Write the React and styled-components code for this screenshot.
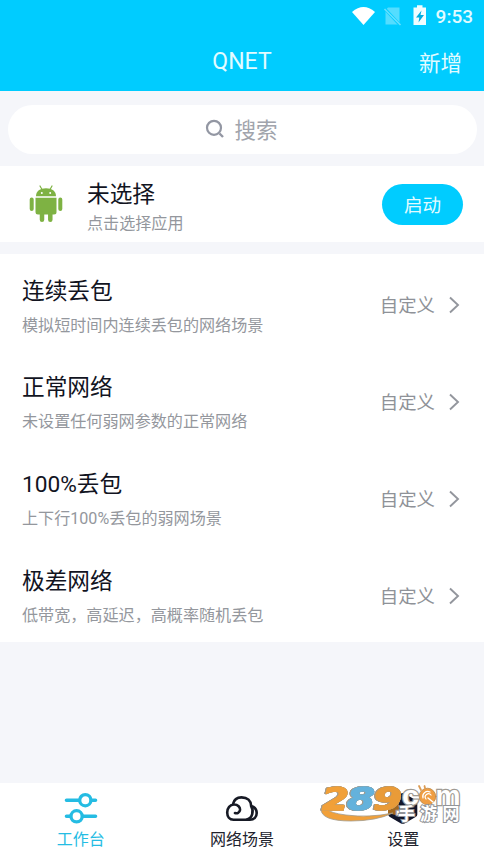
import React from "react";
import styled, { createGlobalStyle } from "styled-components";

const GlobalStyle = createGlobalStyle`
  * {
    box-sizing: border-box;
  }
  body {
    margin: 0;
    background: #f5f6fa;
    font-family: Roboto, "Noto Sans CJK SC", sans-serif;
  }
`;

const Screen = styled.div`
  display: flex;
  flex-direction: column;
  width: 484px;
  height: 860px;
  overflow: hidden;
  background: #f5f6fa;
`;

const Header = styled.header`
  height: 91px;
  background: #00ccff;
  color: #e2fbff;
`;
const StatusBar = styled.div`
  display: flex;
  align-items: center;
  justify-content: flex-end;
  height: 32px;
  padding-right: 11px;
`;
const StatusIcons = styled.svg`
  display: block;
  margin-right: 9px;
`;
const Clock = styled.div`
  padding-top: 1px;
  font-size: 19px;
  font-weight: 500;
  line-height: 32px;
`;
const TitleBar = styled.div`
  display: grid;
  grid-template-columns: 1fr auto 1fr;
  align-items: center;
  height: 59px;
  padding: 0 22px;
`;
const PageTitle = styled.div`
  grid-column: 2;
  font-size: 23px;
  line-height: 28px;
  padding-top: 1px;
`;
const AddButton = styled.div`
  justify-self: end;
  padding-top: 4px;
  font-size: 21.5px;
  line-height: 28px;
`;

const Search = styled.div`
  display: flex;
  align-items: center;
  justify-content: center;
  gap: 9px;
  height: 49px;
  margin: 14px 7px 12px 8px;
  padding-right: 2px;
  border-radius: 25px;
  background: #ffffff;
  font-size: 21.5px;
  line-height: 30px;
  color: #a1a4ac;
`;
const SearchIcon = styled.svg`
  display: block;
  margin-bottom: 2px;
`;
const SearchText = styled.div`
  padding-top: 2px;
`;

const AppCard = styled.div`
  display: flex;
  align-items: center;
  height: 76px;
  margin-bottom: 12px;
  padding: 0 21px 0 29px;
  background: #ffffff;
`;
const Body = styled.div`
  flex: 1;
`;
const AppBody = styled(Body)`
  margin-left: 24px;
  padding-top: 7px;
`;
const Title = styled.div`
  font-size: 22.7px;
  line-height: 32px;
  color: #12141f;
`;
const Hint = styled.div`
  margin-top: ${props => props.$gap || 0}px;
  font-size: 16.1px;
  line-height: 26px;
  color: #94979d;
`;
const StartButton = styled.div`
  width: 81px;
  height: 41px;
  padding-top: 2px;
  border-radius: 21px;
  background: #00ccff;
  font-size: 18.6px;
  line-height: 41px;
  text-align: center;
  color: #e2fbff;
`;

const SceneList = styled.div`
  height: 388px;
  background: #ffffff;
`;
const SceneRow = styled.div`
  display: flex;
  align-items: center;
  height: 96.8px;
  padding: 5.5px 24px 0 22px;
`;
const SceneBody = styled(Body)`
  padding-top: 4px;
`;
const Custom = styled.div`
  display: flex;
  align-items: center;
  gap: 13px;
  font-size: 18.4px;
  line-height: 28px;
  color: #8f9298;
`;
const CustomText = styled.div`
  padding-top: 2px;
`;

const TabBar = styled.nav`
  display: grid;
  grid-template-columns: repeat(3, 1fr);
  position: relative;
  height: 77px;
  margin-top: auto;
  background: #ffffff;
`;
const Tab = styled.div`
  display: flex;
  flex-direction: column;
  align-items: center;
  padding-top: 7px;
  font-size: 16px;
  line-height: 24px;
  color: ${props => (props.$active ? "#25bce3" : "#20222c")};
`;
const TabIcon = styled.svg`
  display: block;
  margin-bottom: 2px;
`;
// the site mark floats over the last tab
const SiteMark = styled.svg`
  position: absolute;
  left: 318px;
  top: 0;
  overflow: visible;
`;
const MarkDigits = styled.g`
  font-family: "DejaVu Sans", sans-serif;
  font-size: 32px;
  font-weight: 700;
  font-style: italic;
  stroke-width: 1.4;
  stroke-linejoin: round;
  filter: drop-shadow(0.7px 0 0 #a29a8c) drop-shadow(-0.7px 0 0 #a29a8c)
    drop-shadow(0 0.6px 0 #a29a8c);
`;
const MarkDomain = styled.g`
  font-family: "Liberation Sans", sans-serif;
  font-size: 27px;
  font-weight: 700;
  fill: #ffffff;
  stroke: #a09b94;
  stroke-width: 2.4;
  paint-order: stroke;
`;
const MarkName = styled.g`
  font-family: "Noto Sans CJK SC", sans-serif;
  font-size: 17px;
  font-weight: 700;
  fill: #ffffff;
  stroke: #92959a;
  stroke-width: 2;
  paint-order: stroke;
`;

const scenes = [
  { name: "连续丢包", hint: "模拟短时间内连续丢包的网络场景" },
  { name: "正常网络", hint: "未设置任何弱网参数的正常网络" },
  { name: "100%丢包", hint: "上下行100%丢包的弱网场景" },
  { name: "极差网络", hint: "低带宽，高延迟，高概率随机丢包" }
];

function StatusGlyphs() {
  return (
    <StatusIcons width="76" height="24" viewBox="0 0 76 24">
      <path d="M1 8Q12.500 -2 24 8L12.500 21Z" fill="#fff" />
      <path
        d="M37 3.500H48.500V20.500H34.500V6Z"
        fill="#fff"
        opacity="0.33"
      />
      <path d="M33.500 4.500L49 21" stroke="#00ccff" strokeWidth="3" />
      <path
        d="M33.500 5L49.500 21"
        stroke="#fff"
        strokeWidth="1.600"
        opacity="0.4"
      />
      <path d="M66 1.200H71.500V3.500H75V21H62.500V3.500H66Z" fill="#f0fdff" />
      <path
        d="M70.500 6.500L65 13.500H68.300L67.500 18.500L73 11H69.500Z"
        fill="#00aee0"
      />
    </StatusIcons>
  );
}

function Android() {
  return (
    <svg width="34" height="38" viewBox="0 0 34 38">
      <g fill="#7eb243" stroke="#7eb243" strokeLinecap="round">
        <path
          d="M7 11.200C7 6 11 3.200 17 3.200S27 6 27 11.200Z"
          stroke="none"
        />
        <path d="M11 1L13 4.500M23 1L21 4.500" strokeWidth="1.200" />
        <path
          d="M6.500 12.700H27.500V27Q27.500 29.500 25 29.500H9Q6.500 29.500 6.500 27Z"
          stroke="none"
        />
        <path d="M2.700 14.500V24M31.300 14.500V24" strokeWidth="4" />
        <path d="M13 29V34.700M21.300 29V34.700" strokeWidth="4.500" />
      </g>
      <circle cx="12.800" cy="7.900" r="1" fill="#fff" />
      <circle cx="21.200" cy="7.900" r="1" fill="#fff" />
    </svg>
  );
}

function Chevron() {
  return (
    <svg width="12" height="18" viewBox="0 0 12 18" fill="none">
      <path d="M2 1.500L10 9L2 16.500" stroke="#93969d" strokeWidth="1.900" />
    </svg>
  );
}

function SlidersIcon() {
  return (
    <TabIcon width="36" height="36" viewBox="0 0 36 36" fill="none">
      <g stroke="#25bce3" strokeWidth="3.600">
        <path
          d="M3.500 10.200H16M28.500 10.200H32.500M3.500 26.300H7M20 26.300H32.500"
          strokeLinecap="round"
        />
        <circle cx="22.300" cy="10.200" r="5.600" strokeWidth="3.300" />
        <circle cx="13.600" cy="26.300" r="5.600" strokeWidth="3.300" />
      </g>
    </TabIcon>
  );
}

function CloudIcon() {
  return (
    <TabIcon width="36" height="36" viewBox="0 0 36 36" fill="none">
      <g stroke="#171a25" strokeWidth="2.600" strokeLinecap="round">
        <path d="M9 14C10 9.500 13 7.400 17.500 7.400C23.500 7.400 27 11 27.200 16C30.500 17 32.700 19.500 32.700 23C32.700 27 30 29.700 26 29.700H9.500C5.500 29.700 3.200 26.500 3.200 22.500C3.200 18 6 14.500 10 14.500C14 14.500 16.300 17.300 16 20C15.600 22.700 13 23.900 11 23" />
        <path d="M27.200 16C30 21 28.500 28 23 29.400" />
      </g>
    </TabIcon>
  );
}

function SettingsIcon() {
  return (
    <TabIcon width="36" height="36" viewBox="0 0 36 36">
      <path
        d="M16 3.500L4.500 10.200Q3.300 11 3.300 12.500V24.500Q3.300 26 4.500 26.700L16 33.400Q17.700 34.300 19.500 33.400L31 26.700Q32.300 26 32.300 24.500V12.500Q32.300 11 31 10.200L19.500 3.500Q17.700 2.600 16 3.500Z"
        fill="#11152a"
      />
    </TabIcon>
  );
}

function Mark() {
  return (
    <SiteMark width="146" height="42" viewBox="0 0 146 42">
      <path d="M70 14L81 9V33L70 30Z" fill="#a2671d" />
      <path
        d="M3 26Q3 38 33 38Q58 38 75 30Q51 35 28 32Q12 30 9 26Z"
        fill="#f1a039"
        stroke="#a29a8c"
        strokeWidth="0.800"
      />
      <MarkDigits>
        <text
          x="4"
          y="26.500"
          textLength="27"
          lengthAdjust="spacingAndGlyphs"
          fill="#f1a039"
          stroke="#f1a039"
        >
          2
        </text>
        <text
          x="29"
          y="26.500"
          textLength="28"
          lengthAdjust="spacingAndGlyphs"
          fill="#64b2dc"
          stroke="#64b2dc"
        >
          8
        </text>
        <text
          x="55"
          y="26.500"
          textLength="29"
          lengthAdjust="spacingAndGlyphs"
          fill="#e99b38"
          stroke="#e99b38"
        >
          9
        </text>
      </MarkDigits>
      <MarkDomain>
        <text x="77" y="32">
          .
        </text>
        <text
          x="84"
          y="21.500"
          textLength="17"
          lengthAdjust="spacingAndGlyphs"
        >
          c
        </text>
        <text
          x="117.500"
          y="21.500"
          textLength="25"
          lengthAdjust="spacingAndGlyphs"
        >
          m
        </text>
      </MarkDomain>
      <g fill="none" strokeLinecap="round">
        <circle
          cx="109.500"
          cy="13.500"
          r="8.300"
          fill="#ef9d42"
          stroke="#b9894d"
          strokeWidth="0.800"
        />
        <path d="M103 7L101 3M107 5L106.500 3" stroke="#dc9c55" strokeWidth="1.800" />
        <path
          d="M105 15A5 5 0 0 1 112 9M108 16A3 3 0 0 1 113 12"
          stroke="#fff"
          strokeWidth="1.200"
        />
        <path d="M110 15L115 19" stroke="#fff" strokeWidth="1.500" />
      </g>
      <MarkName>
        <text x="80" y="37">
          手
        </text>
        <text x="102" y="37">
          游
        </text>
        <text x="124.500" y="37">
          网
        </text>
      </MarkName>
    </SiteMark>
  );
}

function App() {
  return (
    <Screen>
      <GlobalStyle />
      <Header>
        <StatusBar>
          <StatusGlyphs />
          <Clock>9:53</Clock>
        </StatusBar>
        <TitleBar>
          <PageTitle>QNET</PageTitle>
          <AddButton>新增</AddButton>
        </TitleBar>
      </Header>
      <Search>
        <SearchIcon width="20" height="20" viewBox="0 0 20 20" fill="none">
          <circle cx="9" cy="8.800" r="7" stroke="#9397a3" strokeWidth="2.200" />
          <path
            d="M14.500 14.500L18 18"
            stroke="#9397a3"
            strokeWidth="2.400"
          />
        </SearchIcon>
        <SearchText>搜索</SearchText>
      </Search>
      <AppCard>
        <Android />
        <AppBody>
          <Title>未选择</Title>
          <Hint>点击选择应用</Hint>
        </AppBody>
        <StartButton>启动</StartButton>
      </AppCard>
      <SceneList>
        {scenes.map(scene => (
          <SceneRow key={scene.name}>
            <SceneBody>
              <Title>{scene.name}</Title>
              <Hint $gap={5}>{scene.hint}</Hint>
            </SceneBody>
            <Custom>
              <CustomText>自定义</CustomText>
              <Chevron />
            </Custom>
          </SceneRow>
        ))}
      </SceneList>
      <TabBar>
        <Tab $active>
          <SlidersIcon />
          工作台
        </Tab>
        <Tab>
          <CloudIcon />
          网络场景
        </Tab>
        <Tab>
          <SettingsIcon />
          设置
        </Tab>
        <Mark />
      </TabBar>
    </Screen>
  );
}

export default App;
